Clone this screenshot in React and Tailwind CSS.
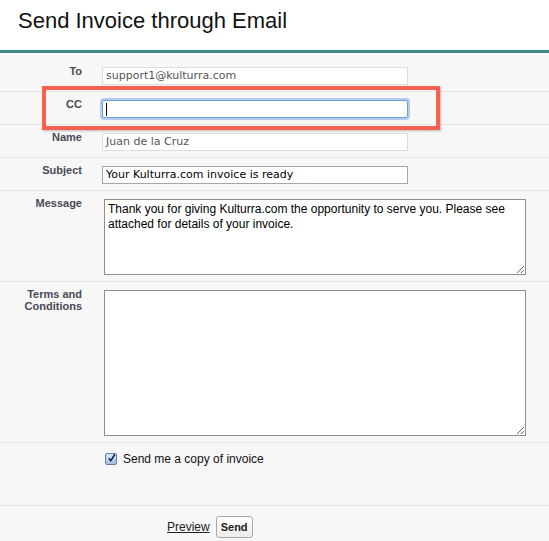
import { useState } from "react";

const labelCls =
  "-mt-[2px] w-[82px] shrink-0 text-right text-[11px] leading-[12px] font-bold text-[#4a4a56] font-['Liberation_Sans',Arial,sans-serif]";
const inputFont = "font-['DejaVu_Sans','Liberation_Sans',sans-serif] text-[11px]";

function Row({ label, className, children }) {
  return (
    <div className={`flex items-start gap-[20px] border-b border-[#e6e6e6] ${className}`}>
      <div className={labelCls}>{label}</div>
      {children}
    </div>
  );
}

export default function App() {
  const [copy, setCopy] = useState(true);

  return (
    <div className="relative h-[541px] w-[549px] overflow-hidden bg-[#f7f7f7] font-['Liberation_Sans',Arial,sans-serif]">
      <header className="h-[53px] border-b-[3px] border-[#3b8b87] bg-white pl-[18px] pt-[8px]">
        <h1 className="text-[22px] leading-[26px] text-[#111]">Send Invoice through Email</h1>
      </header>

      <Row label="To" className="h-[39px] pt-[14px]">
        <div className={`h-[18px] w-[306px] border border-[#dcdcdc] bg-white px-[3px] leading-[16px] text-[#555] ${inputFont}`}>
          support1@kulturra.com
        </div>
      </Row>

      <Row label="CC" className="h-[33px] pt-[8px]">
        <div className="flex h-[18px] w-[306px] items-center rounded-[2px] border border-[#6f9fd8] bg-white px-[3px] shadow-[0_0_0_2px_#b3cdee]">
          <span className="h-[13px] w-px bg-black" />
        </div>
      </Row>

      <Row label="Name" className="h-[33px] pt-[8px]">
        <div className={`h-[18px] w-[306px] border border-[#dcdcdc] bg-white px-[3px] leading-[16px] text-[#555] ${inputFont}`}>
          Juan de la Cruz
        </div>
      </Row>

      <Row label="Subject" className="h-[33px] pt-[8px]">
        <div className={`h-[18px] w-[306px] border border-[#a6a6a6] bg-white px-[3px] leading-[16px] text-black ${inputFont}`}>
          Your Kulturra.com invoice is ready
        </div>
      </Row>

      <Row label="Message" className="h-[91px] pt-[8px]">
        <textarea
          readOnly
          className="ml-[2px] h-[76px] w-[422px] border border-[#8f8f8f] bg-white px-[3px] py-[2px] text-[12px] leading-[15px] text-black outline-none"
          defaultValue="Thank you for giving Kulturra.com the opportunity to serve you. Please see attached for details of your invoice."
        />
      </Row>

      <Row label={<>Terms and<br />Conditions</>} className="h-[161px] pt-[8px]">
        <textarea
          readOnly
          className="ml-[2px] h-[146px] w-[422px] border border-[#8f8f8f] bg-white outline-none"
        />
      </Row>

      <div className="flex h-[63px] items-start border-b border-[#e0e0e0] pl-[105px] pt-[9px]">
        <label className="flex cursor-pointer items-center gap-[6px] text-[12px] leading-[14px] text-[#111]">
          <span
            onClick={() => setCopy(!copy)}
            className="flex h-[12px] w-[12px] items-center justify-center rounded-[2px] border border-[#5f7fae] bg-gradient-to-b from-[#dbe8f8] to-[#9ebde6]"
          >
            {copy && (
              <svg width="12" height="12" viewBox="0 0 12 12" className="-mt-[2px] ml-[1px]">
                <path d="M2.5 6.5 L5 9.5 L10.5 1" fill="none" stroke="#10203d" strokeWidth="2" />
              </svg>
            )}
          </span>
          Send me a copy of invoice
        </label>
      </div>

      <div className="flex items-center gap-[6px] pl-[167px] pt-[10px]">
        <a className="text-[12px] text-[#222] underline">Preview</a>
        <button className="h-[22px] rounded-[3px] border border-[#a9a9a9] bg-gradient-to-b from-white to-[#ececec] px-[4px] text-[11px] font-bold text-[#222]">
          Send
        </button>
      </div>

      <div className="pointer-events-none absolute left-[42px] top-[86px] h-[44px] w-[398px] border-[4px] border-[#f8604f] shadow-[1px_1px_2px_rgba(0,0,0,0.25)]" />
    </div>
  );
}
